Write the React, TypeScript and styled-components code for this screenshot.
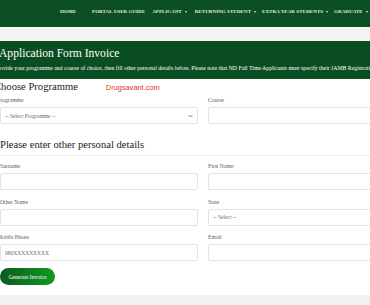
import styled, { createGlobalStyle } from 'styled-components'

const GlobalStyle = createGlobalStyle`
    html, body {
        margin: 0;
        padding: 0;
        background: #ffffff;
        overflow: hidden;
        font-family: "Liberation Serif", "Times New Roman", serif;
    }
`

const Page = styled.div`
    width: 370px;
    height: 305px;
    overflow: hidden;
    background: #ffffff;
`

const TopNav = styled.nav`
    height: 27px;
    background: #0b4f23;
    display: flex;
    align-items: flex-start;
    padding: 8px 0 0 60px;
    box-sizing: border-box;
    white-space: nowrap;
`

const NavItem = styled.a<{ $gap?: number; $caret?: boolean }>`
    color: #e6ece8;
    font-size: 5px;
    font-weight: bold;
    letter-spacing: 0.05px;
    text-transform: uppercase;
    margin-right: ${p => p.$gap ?? 9}px;
    line-height: 7px;
    display: flex;
    align-items: center;
    &::after {
        content: '';
        display: ${p => (p.$caret ? 'inline-block' : 'none')};
        margin-left: 3px;
        border-left: 1.5px solid transparent;
        border-right: 1.5px solid transparent;
        border-top: 2px solid #e6ece8;
    }
`

const Band = styled.div`
    height: 14px;
    background: #f3f3f3;
`

const Banner = styled.header`
    height: 38px;
    background: #0a4d21;
    color: #ffffff;
    padding-top: 6px;
    box-sizing: border-box;
    white-space: nowrap;
    h1 {
        margin: 0 0 0 -1px;
        font-size: 11.6px;
        font-weight: normal;
        line-height: 14px;
    }
    p {
        margin: 4px 0 0 -5px;
        font-size: 5.75px;
        line-height: 7px;
    }
`

const Content = styled.main`
    padding-top: 1px;
`

const HeadingRow = styled.div`
    display: flex;
    align-items: baseline;
    white-space: nowrap;
    margin-bottom: 3px;
`

const SectionTitle = styled.h2<{ $shift?: number; $top?: number }>`
    margin: ${p => p.$top ?? 0}px 0 0 ${p => p.$shift ?? 0}px;
    font-size: 10.6px;
    font-weight: normal;
    color: #222;
    line-height: 13px;
`

const Watermark = styled.span`
    margin-left: 28px;
    font-family: "Liberation Sans", Arial, sans-serif;
    font-size: 7.4px;
    color: #e0302c;
`

const Grid = styled.div`
    display: grid;
    grid-template-columns: 198px 198px;
    column-gap: 10px;
    row-gap: 7.5px;
`

const Field = styled.div`
    display: flex;
    flex-direction: column;
`

const Label = styled.label<{ $shift?: number }>`
    font-size: 5.7px;
    color: #5e5e5e;
    line-height: 8px;
    margin: 0 0 3px ${p => p.$shift ?? 0}px;
    white-space: nowrap;
`

const Box = styled.div`
    height: 17px;
    border: 1px solid #e2e2e2;
    border-radius: 2px;
    box-sizing: border-box;
    display: flex;
    align-items: center;
    justify-content: space-between;
    padding: 0 4px;
    font-size: 5.5px;
    color: #6a6a6a;
    background: #fff;
`

const Chevron = styled.svg`
    width: 5px;
    height: 4px;
`

const Divider = styled.div`
    height: 1px;
    background: #ececec;
    margin: 4px 0 6px;
`

const GenerateButton = styled.button`
    margin-top: 7px;
    width: 55px;
    height: 17px;
    border: none;
    border-radius: 9px;
    background: linear-gradient(90deg, #0b5a22 0%, #129a1f 100%);
    color: #ffffff;
    font-family: "Liberation Serif", "Times New Roman", serif;
    font-size: 5.5px;
    padding: 0;
`

const Footer = styled.footer`
    margin-top: 10px;
    height: 20px;
    background: #f1f1f1;
`

const Select = ({ text }: { text: string }) => (
    <Box>
        <span>{text}</span>
        <Chevron viewBox="0 0 10 8">
            <path d="M1 2 L5 6 L9 2" fill="none" stroke="#555" strokeWidth="1.6" />
        </Chevron>
    </Box>
)

const App = () => {
    return (
        <Page>
            <GlobalStyle />
            <TopNav>
                <NavItem $gap={16}>Home</NavItem>
                <NavItem $gap={7}>Portal User Guide</NavItem>
                <NavItem $gap={8} $caret>Applicant</NavItem>
                <NavItem $gap={6} $caret>Returning Student</NavItem>
                <NavItem $gap={6} $caret>Extra Year Students</NavItem>
                <NavItem $gap={7} $caret>Graduate</NavItem>
                <NavItem>S</NavItem>
            </TopNav>
            <Band />
            <Banner>
                <h1>Application Form Invoice</h1>
                <p>Provide your programme and course of choice, then fill other personal details below. Please note that ND Full Time Applicants must specify their JAMB Registration Number.</p>
            </Banner>
            <Content>
                <HeadingRow>
                    <SectionTitle $shift={-6}>Choose Programme</SectionTitle>
                    <Watermark>Drugsavant.com</Watermark>
                </HeadingRow>
                <Grid>
                    <Field>
                        <Label $shift={-3}>Programme</Label>
                        <Select text="-- Select Programme --" />
                    </Field>
                    <Field>
                        <Label>Course</Label>
                        <Box />
                    </Field>
                </Grid>
                <SectionTitle $top={14}>Please enter other personal details</SectionTitle>
                <Divider />
                <Grid>
                    <Field>
                        <Label>Surname</Label>
                        <Box />
                    </Field>
                    <Field>
                        <Label>First Name</Label>
                        <Box />
                    </Field>
                    <Field>
                        <Label>Other Name</Label>
                        <Box />
                    </Field>
                    <Field>
                        <Label>State</Label>
                        <Select text="-- Select --" />
                    </Field>
                    <Field>
                        <Label $shift={-3}>Mobile Phone</Label>
                        <Box>080XXXXXXXXX</Box>
                    </Field>
                    <Field>
                        <Label>Email</Label>
                        <Box />
                    </Field>
                </Grid>
                <GenerateButton>Generate Invoice</GenerateButton>
                <Footer />
            </Content>
        </Page>
    )
}

export default App
